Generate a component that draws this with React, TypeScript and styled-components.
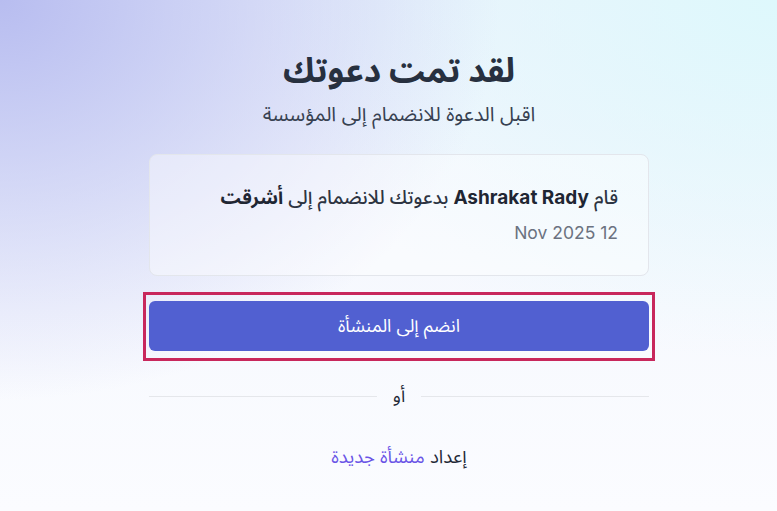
import React from "react";
import styled, { createGlobalStyle } from "styled-components";

const GlobalStyle = createGlobalStyle`
    html, body {
        margin: 0;
        padding: 0;
    }

    body {
        font-family: Inter, "Noto Sans Arabic", "Noto Sans Arabic UI", "Noto Naskh Arabic", "DejaVu Sans", sans-serif;
        color: #1f2937;
    }
`;

export default function App() {
    return (
        <>
            <GlobalStyle />
            <Page dir="rtl">
                <Column>
                    <Title>لقد تمت دعوتك</Title>
                    <Subtitle>اقبل الدعوة للانضمام إلى المؤسسة</Subtitle>

                    <InviteCard>
                        <InviteText>
                            قام <strong>Ashrakat Rady</strong> بدعوتك للانضمام إلى <strong>أشرقت</strong>
                        </InviteText>
                        <InviteDate>12 Nov 2025</InviteDate>
                    </InviteCard>

                    <FocusFrame>
                        <JoinButton type="button">انضم إلى المنشأة</JoinButton>
                    </FocusFrame>

                    <Divider>
                        <Line />
                        <DividerText>أو</DividerText>
                        <Line />
                    </Divider>

                    <CreateRow>
                        إعداد <CreateLink href="#">منشأة جديدة</CreateLink>
                    </CreateRow>
                </Column>
            </Page>
        </>
    );
}

const Page = styled.div`
    min-height: 511px;
    box-sizing: border-box;
    display: flex;
    justify-content: center;
    padding: 47px 0 0 21px;
    background:
        radial-gradient(ellipse 500px 400px at 0% 0%, rgba(184, 189, 240, 1), rgba(184, 189, 240, 0) 100%),
        radial-gradient(ellipse 520px 360px at 100% 0%, rgba(222, 248, 252, 1), rgba(222, 248, 252, 0) 100%),
        linear-gradient(180deg, #eef3fc 0%, #f7f9fe 60%, #fbfcff 100%);
`;

const Column = styled.div`
    width: 500px;
    display: flex;
    flex-direction: column;
    align-items: stretch;
`;

const Title = styled.h1`
    margin: 0;
    text-align: center;
    font-size: 33.5px;
    line-height: 46px;
    font-weight: 700;
    color: #27303f;
`;

const Subtitle = styled.p`
    margin: 8px 0 0;
    text-align: center;
    font-size: 20px;
    line-height: 26px;
    color: #374151;
`;

const InviteCard = styled.div`
    margin-top: 27px;
    height: 122px;
    box-sizing: border-box;
    padding: 28px 30px 0;
    border: 1px solid #e3e6ec;
    border-radius: 8px;
    background: rgba(255, 255, 255, 0.4);
`;

const InviteText = styled.p`
    margin: 0;
    font-size: 19px;
    line-height: 30px;
    font-weight: 500;
    color: #2d3442;

    strong {
        font-weight: 700;
        color: #1f2633;
    }
`;

const InviteDate = styled.p`
    margin: 8px 0 0;
    font-size: 17.5px;
    line-height: 24px;
    color: #6b7280;
`;

const FocusFrame = styled.div`
    margin: 16px -6px 0;
    padding: 6px 3px 7px;
    border: 3px solid #c8275c;
`;

const JoinButton = styled.button`
    width: 100%;
    height: 50px;
    border: none;
    border-radius: 6px;
    background: #5160d1;
    color: #ffffff;
    font-family: inherit;
    font-size: 18px;
    cursor: pointer;
`;

const Divider = styled.div`
    margin-top: 22px;
    display: flex;
    align-items: center;
    gap: 16px;
`;

const Line = styled.div`
    flex: 1;
    height: 1px;
    background: #e5e7eb;
`;

const DividerText = styled.span`
    font-size: 18px;
    line-height: 26px;
    color: #1f2937;
`;

const CreateRow = styled.p`
    margin: 34px 0 0;
    text-align: center;
    font-size: 18.5px;
    line-height: 26px;
    color: #1f2937;
`;

const CreateLink = styled.a`
    color: #6a55e6;
    text-decoration: none;
`;
